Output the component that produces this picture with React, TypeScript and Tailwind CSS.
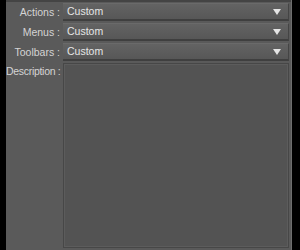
import React from 'react';

const rows = [
  { label: 'Actions', value: 'Custom' },
  { label: 'Menus', value: 'Custom' },
  { label: 'Toolbars', value: 'Custom' },
];

const Arrow: React.FC = () => (
  <svg width="8" height="6" viewBox="0 0 8 6" className="shrink-0">
    <polygon points="0,0 8,0 4,6" fill="#e4e4e4" />
  </svg>
);

const Select: React.FC<{ value: string }> = ({ value }) => (
  <div className="flex h-[18px] flex-1 items-center justify-between border-t border-t-[#6a6a6a] border-b-2 border-b-[#3f3f3f] border-r border-r-[#444444] bg-gradient-to-b from-[#636363] to-[#575757] pl-[4px] pr-[7px]">
    <span className="text-[#e6e6e6]">{value}</span>
    <Arrow />
  </div>
);

const App: React.FC = () => {
  return (
    <div
      className="flex h-[250px] w-[300px] bg-black text-[10.5px] leading-none"
      style={{ fontFamily: '"Liberation Sans", Arial, sans-serif' }}
    >
      <div className="ml-[6px] flex w-[286px] flex-col border-r border-r-[#6e6e6e] bg-[#5a5a5a]">
        <div className="h-[2px] bg-[#444444]" />
        <div className="flex flex-col gap-[2px] pt-[1px]">
          {rows.map((r) => (
            <div key={r.label} className="flex items-center pr-[2px]">
              <div className="w-[57px] whitespace-nowrap pr-[3px] text-right text-[#d4d4d4]">{r.label} :</div>
              <Select value={r.value} />
            </div>
          ))}
        </div>
        <div className="mt-[2px] flex flex-1 pb-[2px] pr-[2px]">
          <div className="w-[57px] whitespace-nowrap pr-[3px] pt-[3px] text-right tracking-[-0.3px] text-[#d4d4d4]">
            Description :
          </div>
          <div className="flex-1 border border-[#474747] bg-[#535353] shadow-[inset_0_0_0_1px_#5c5c5c]" />
        </div>
      </div>
    </div>
  );
};

export default App;
